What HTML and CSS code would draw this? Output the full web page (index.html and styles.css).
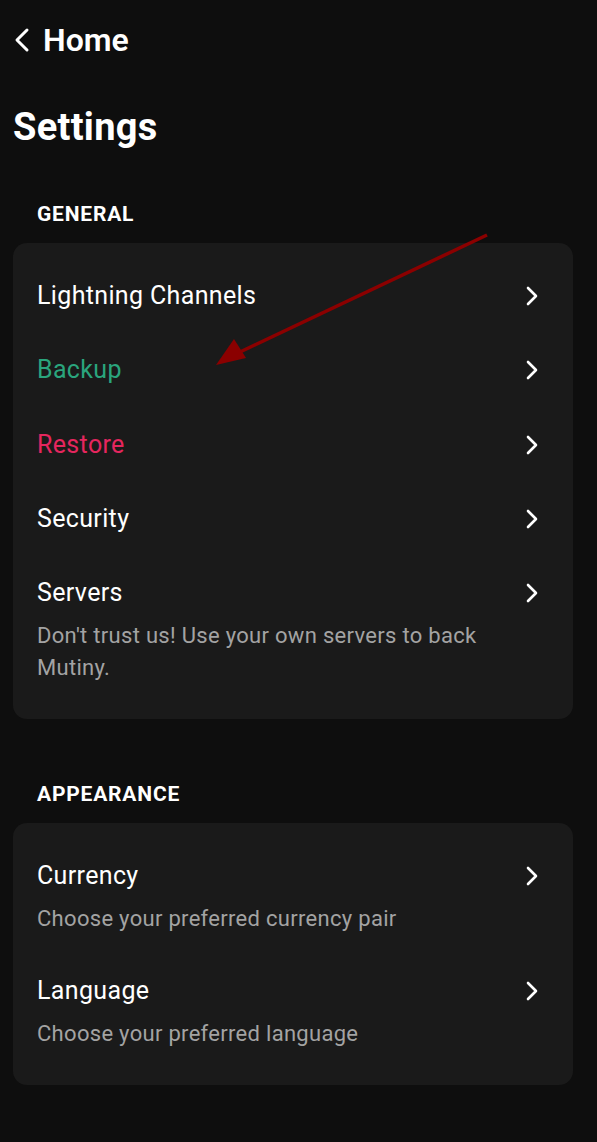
FILE: index.html
```html
<!DOCTYPE html>
<html lang="en">
<head>
<meta charset="utf-8">
<title>Settings</title>
<link rel="stylesheet" href="styles.css">
</head>
<body>
<div class="page">
  <a class="back" href="#">
    <svg class="back-icon" width="16" height="26" viewBox="0 0 16 26"><path d="M13 3 L3 13 L13 23" fill="none" stroke="#fff" stroke-width="3" stroke-linecap="round" stroke-linejoin="round"/></svg>
    <span>Home</span>
  </a>
  <h1 class="title">Settings</h1>

  <section class="section">
    <h2 class="section-title">GENERAL</h2>
    <div class="card">
      <div class="item"><div class="item-row"><span class="item-title">Lightning Channels</span><svg class="chev" width="14" height="22" viewBox="0 0 14 22"><path d="M3 3 L11 11 L3 19" fill="none" stroke="#fff" stroke-width="2.6" stroke-linecap="round" stroke-linejoin="round"/></svg></div></div>
      <div class="item"><div class="item-row"><span class="item-title green">Backup</span><svg class="chev" width="14" height="22" viewBox="0 0 14 22"><path d="M3 3 L11 11 L3 19" fill="none" stroke="#fff" stroke-width="2.6" stroke-linecap="round" stroke-linejoin="round"/></svg></div></div>
      <div class="item"><div class="item-row"><span class="item-title red">Restore</span><svg class="chev" width="14" height="22" viewBox="0 0 14 22"><path d="M3 3 L11 11 L3 19" fill="none" stroke="#fff" stroke-width="2.6" stroke-linecap="round" stroke-linejoin="round"/></svg></div></div>
      <div class="item"><div class="item-row"><span class="item-title">Security</span><svg class="chev" width="14" height="22" viewBox="0 0 14 22"><path d="M3 3 L11 11 L3 19" fill="none" stroke="#fff" stroke-width="2.6" stroke-linecap="round" stroke-linejoin="round"/></svg></div></div>
      <div class="item has-desc"><div class="item-row"><span class="item-title">Servers</span><svg class="chev" width="14" height="22" viewBox="0 0 14 22"><path d="M3 3 L11 11 L3 19" fill="none" stroke="#fff" stroke-width="2.6" stroke-linecap="round" stroke-linejoin="round"/></svg></div>
        <p class="desc">Don't trust us! Use your own servers to back Mutiny.</p></div>
    </div>
  </section>

  <section class="section">
    <h2 class="section-title">APPEARANCE</h2>
    <div class="card">
      <div class="item has-desc"><div class="item-row"><span class="item-title">Currency</span><svg class="chev" width="14" height="22" viewBox="0 0 14 22"><path d="M3 3 L11 11 L3 19" fill="none" stroke="#fff" stroke-width="2.6" stroke-linecap="round" stroke-linejoin="round"/></svg></div>
        <p class="desc">Choose your preferred currency pair</p></div>
      <div class="item has-desc"><div class="item-row"><span class="item-title">Language</span><svg class="chev" width="14" height="22" viewBox="0 0 14 22"><path d="M3 3 L11 11 L3 19" fill="none" stroke="#fff" stroke-width="2.6" stroke-linecap="round" stroke-linejoin="round"/></svg></div>
        <p class="desc">Choose your preferred language</p></div>
    </div>
  </section>

  <svg class="annotation" width="597" height="1142" viewBox="0 0 597 1142">
    <line x1="487" y1="235" x2="240" y2="352" stroke="#8b0000" stroke-width="3.5"/>
    <polygon points="216,365 234,339 246,358" fill="#8b0000"/>
  </svg>
</div>
</body>
</html>
```

FILE: styles.css
```css
* { box-sizing: border-box; }
html, body {
  margin: 0;
  padding: 0;
  background: #0e0e0e;
  color: #ffffff;
  font-family: Roboto, "Liberation Sans", sans-serif;
}
.page {
  position: relative;
  min-height: 1142px;
  padding: 22px 24px 40px 13px;
}
.back {
  display: flex;
  align-items: center;
  gap: 13px;
  color: #fff;
  text-decoration: none;
  font-size: 32px;
  font-weight: 600;
  line-height: 36px;
  padding-left: 1px;
}
.back-icon { display: block; }
.title {
  margin: 47px 0 0 0;
  font-size: 38px;
  font-weight: 700;
  letter-spacing: 0.3px;
  line-height: 44px;
}
.section { margin-top: 53px; }
.section + .section { margin-top: 63px; }
.section-title {
  margin: 0 0 17px 24px;
  font-size: 21px;
  font-weight: 700;
  letter-spacing: 0.8px;
  line-height: 24px;
}
.card {
  background: #1a1a1a;
  border-radius: 14px;
  padding: 16px 24px;
}
.item { padding: 21px 0 21.25px; }
.item.has-desc { padding-bottom: 19px; }
.item-row {
  display: flex;
  align-items: center;
  justify-content: space-between;
}
.item-title {
  font-size: 25px;
  letter-spacing: 0.35px;
  line-height: 32px;
  font-weight: 400;
}
.green { color: #2aa57d; }
.red { color: #e5265e; }
.chev { display: block; margin-right: 10px; }
.desc {
  margin: 11px 0 0 0;
  font-size: 22px;
  letter-spacing: 0.3px;
  line-height: 32px;
  color: #a3a3a3;
  max-width: 470px;
}
.annotation {
  position: absolute;
  left: 0;
  top: 0;
  pointer-events: none;
}
```
